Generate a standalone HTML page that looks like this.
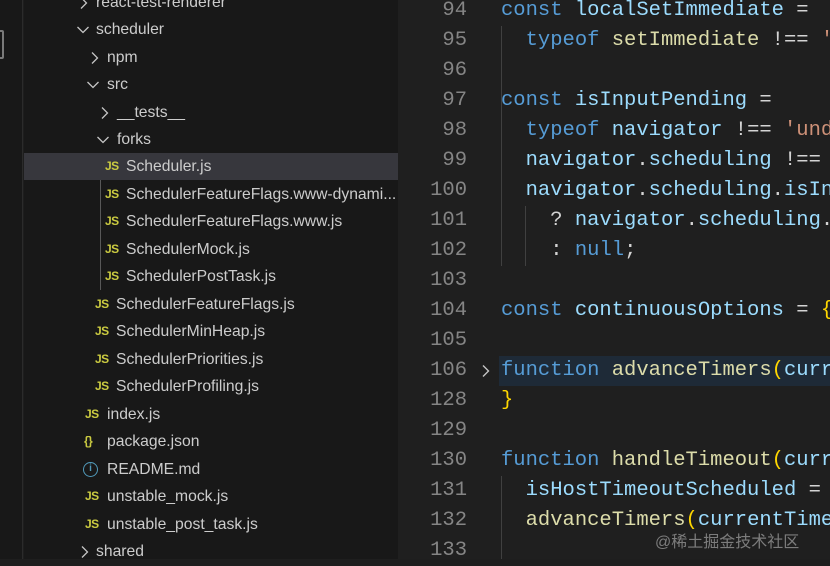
<!DOCTYPE html>
<html><head><meta charset="utf-8"><style>
*{margin:0;padding:0;box-sizing:border-box}
body{width:830px;height:559px;overflow:hidden;background:#1e1e1e;position:relative;font-family:"Liberation Sans",sans-serif}
#act{position:absolute;left:0;top:0;width:23px;height:559px;background:#181818;border-right:1px solid #2b2b2b}
#act .ic{position:absolute;left:-4px;top:30px;width:8px;height:29px;border:2px solid #7a7a7a;border-radius:2px}
#side{position:absolute;left:24px;top:0;width:374px;height:559px;background:#181818;overflow:hidden}
.r{position:absolute;left:0;width:374px;height:27px;color:#cccccc;font-size:15.7px;line-height:27px;white-space:nowrap}
.r span{position:absolute}
.r svg{position:absolute;top:7px}
.sel{background:#37373d}
.js{color:#cbcb41;font-weight:bold;font-size:12px;letter-spacing:-0.5px}
#guide{position:absolute;left:76px;top:153px;width:1px;height:137px;background:#585858}
#ed{position:absolute;left:398px;top:0;width:432px;height:559px;background:#1f1f1f;font-family:"Liberation Mono",monospace;font-size:20.5px}
.l{position:absolute;left:0;height:30px;width:432px;line-height:30px;white-space:pre}
.n{position:absolute;right:363px;color:#858585;text-align:right}
.c{position:absolute;left:103px}
.hl{position:absolute;left:101px;width:331px;height:30px;background:#1e2a37}
.k{color:#569cd6}.v{color:#9cdcfe}.f{color:#dcdcaa}.s{color:#ce9178}.o{color:#d4d4d4}.y{color:#ffd700}
.g{position:absolute;width:1px;background:#404040}
#wm{position:absolute;left:655px;top:528px;color:rgba(200,200,200,0.55);font-family:"Liberation Sans","Noto Sans CJK SC",sans-serif;font-size:16px}
</style></head><body>
<div id="act"><div class="ic"></div></div>
<div id="side">
<div id="guide"></div>
<div class="r" style="top:-11px"><svg style="left:53px" width="14" height="14" viewBox="0 0 14 14"><path d="M4 1.5L9.5 7L4 12.5" fill="none" stroke="#c5c5c5" stroke-width="1.3"/></svg><span style="left:72px">react-test-renderer</span></div>
<div class="r" style="top:16px"><svg style="left:52px" width="14" height="14" viewBox="0 0 14 14"><path d="M1.5 4L7 9.5L12.5 4" fill="none" stroke="#c5c5c5" stroke-width="1.3"/></svg><span style="left:72px">scheduler</span></div>
<div class="r" style="top:44px"><svg style="left:64px" width="14" height="14" viewBox="0 0 14 14"><path d="M4 1.5L9.5 7L4 12.5" fill="none" stroke="#c5c5c5" stroke-width="1.3"/></svg><span style="left:83px">npm</span></div>
<div class="r" style="top:71px"><svg style="left:62px" width="14" height="14" viewBox="0 0 14 14"><path d="M1.5 4L7 9.5L12.5 4" fill="none" stroke="#c5c5c5" stroke-width="1.3"/></svg><span style="left:83px">src</span></div>
<div class="r" style="top:99px"><svg style="left:74px" width="14" height="14" viewBox="0 0 14 14"><path d="M4 1.5L9.5 7L4 12.5" fill="none" stroke="#c5c5c5" stroke-width="1.3"/></svg><span style="left:93px">__tests__</span></div>
<div class="r" style="top:126px"><svg style="left:72px" width="14" height="14" viewBox="0 0 14 14"><path d="M1.5 4L7 9.5L12.5 4" fill="none" stroke="#c5c5c5" stroke-width="1.3"/></svg><span style="left:93px">forks</span></div>
<div class="r sel" style="top:153px"><span class="js" style="left:81px">JS</span><span style="left:102px">Scheduler.js</span></div>
<div class="r" style="top:181px"><span class="js" style="left:81px">JS</span><span style="left:102px">SchedulerFeatureFlags.www-dynami...</span></div>
<div class="r" style="top:208px"><span class="js" style="left:81px">JS</span><span style="left:102px">SchedulerFeatureFlags.www.js</span></div>
<div class="r" style="top:236px"><span class="js" style="left:81px">JS</span><span style="left:102px">SchedulerMock.js</span></div>
<div class="r" style="top:263px"><span class="js" style="left:81px">JS</span><span style="left:102px">SchedulerPostTask.js</span></div>
<div class="r" style="top:291px"><span class="js" style="left:71px">JS</span><span style="left:92px">SchedulerFeatureFlags.js</span></div>
<div class="r" style="top:318px"><span class="js" style="left:71px">JS</span><span style="left:92px">SchedulerMinHeap.js</span></div>
<div class="r" style="top:346px"><span class="js" style="left:71px">JS</span><span style="left:92px">SchedulerPriorities.js</span></div>
<div class="r" style="top:373px"><span class="js" style="left:71px">JS</span><span style="left:92px">SchedulerProfiling.js</span></div>
<div class="r" style="top:401px"><span class="js" style="left:61px">JS</span><span style="left:83px">index.js</span></div>
<div class="r" style="top:428px"><span class="js" style="left:60px">{}</span><span style="left:83px">package.json</span></div>
<div class="r" style="top:456px"><span style="left:59px;top:6px;width:15px;height:15px;border:1.5px solid #519aba;border-radius:50%;color:#519aba;font-size:10px;line-height:12px;text-align:center;font-weight:bold">i</span><span style="left:83px">README.md</span></div>
<div class="r" style="top:483px"><span class="js" style="left:61px">JS</span><span style="left:83px">unstable_mock.js</span></div>
<div class="r" style="top:511px"><span class="js" style="left:61px">JS</span><span style="left:83px">unstable_post_task.js</span></div>
<div class="r" style="top:538px"><svg style="left:54px" width="14" height="14" viewBox="0 0 14 14"><path d="M4 1.5L9.5 7L4 12.5" fill="none" stroke="#c5c5c5" stroke-width="1.3"/></svg><span style="left:72px">shared</span></div>
</div>
<div id="ed">
<div class="g" style="left:103px;top:26px;height:240px"></div>
<div class="g" style="left:127px;top:206px;height:60px"></div>
<div class="g" style="left:103px;top:476px;height:83px"></div>
<div class="l" style="top:-4px"><span class="n">94</span><span class="c"><span class="k">const</span> <span class="v">localSetImmediate</span> <span class="o">=</span></span></div>
<div class="l" style="top:26px"><span class="n">95</span><span class="c">  <span class="k">typeof</span> <span class="f">setImmediate</span> <span class="o">!==</span> <span class="s">'</span></span></div>
<div class="l" style="top:56px"><span class="n">96</span></div>
<div class="l" style="top:86px"><span class="n">97</span><span class="c"><span class="k">const</span> <span class="v">isInputPending</span> <span class="o">=</span></span></div>
<div class="l" style="top:116px"><span class="n">98</span><span class="c">  <span class="k">typeof</span> <span class="v">navigator</span> <span class="o">!==</span> <span class="s">'und</span></span></div>
<div class="l" style="top:146px"><span class="n">99</span><span class="c">  <span class="v">navigator</span><span class="o">.</span><span class="v">scheduling</span> <span class="o">!==</span></span></div>
<div class="l" style="top:176px"><span class="n">100</span><span class="c">  <span class="v">navigator</span><span class="o">.</span><span class="v">scheduling</span><span class="o">.</span><span class="v">isIn</span></span></div>
<div class="l" style="top:206px"><span class="n">101</span><span class="c">    <span class="o">?</span> <span class="v">navigator</span><span class="o">.</span><span class="v">scheduling</span><span class="o">.</span></span></div>
<div class="l" style="top:236px"><span class="n">102</span><span class="c">    <span class="o">:</span> <span class="k">null</span><span class="o">;</span></span></div>
<div class="l" style="top:266px"><span class="n">103</span></div>
<div class="l" style="top:296px"><span class="n">104</span><span class="c"><span class="k">const</span> <span class="v">continuousOptions</span> <span class="o">=</span> <span class="y">{</span></span></div>
<div class="l" style="top:326px"><span class="n">105</span></div>
<div class="l" style="top:356px"><div class="hl"></div><span class="n">106</span><svg style="position:absolute;left:81px;top:8px" width="14" height="14" viewBox="0 0 14 14"><path d="M4 1.5L9.5 7L4 12.5" fill="none" stroke="#c5c5c5" stroke-width="1.4"/></svg><span class="c"><span class="k">function</span> <span class="f">advanceTimers</span><span class="y">(</span><span class="v">curr</span></span></div>
<div class="l" style="top:386px"><span class="n">128</span><span class="c"><span class="y">}</span></span></div>
<div class="l" style="top:416px"><span class="n">129</span></div>
<div class="l" style="top:446px"><span class="n">130</span><span class="c"><span class="k">function</span> <span class="f">handleTimeout</span><span class="y">(</span><span class="v">curr</span></span></div>
<div class="l" style="top:476px"><span class="n">131</span><span class="c">  <span class="v">isHostTimeoutScheduled</span> <span class="o">=</span></span></div>
<div class="l" style="top:506px"><span class="n">132</span><span class="c">  <span class="f">advanceTimers</span><span class="y">(</span><span class="v">currentTime</span></span></div>
<div class="l" style="top:536px"><span class="n">133</span></div>
</div>
<div id="wm">@稀土掘金技术社区</div>
</body></html>
